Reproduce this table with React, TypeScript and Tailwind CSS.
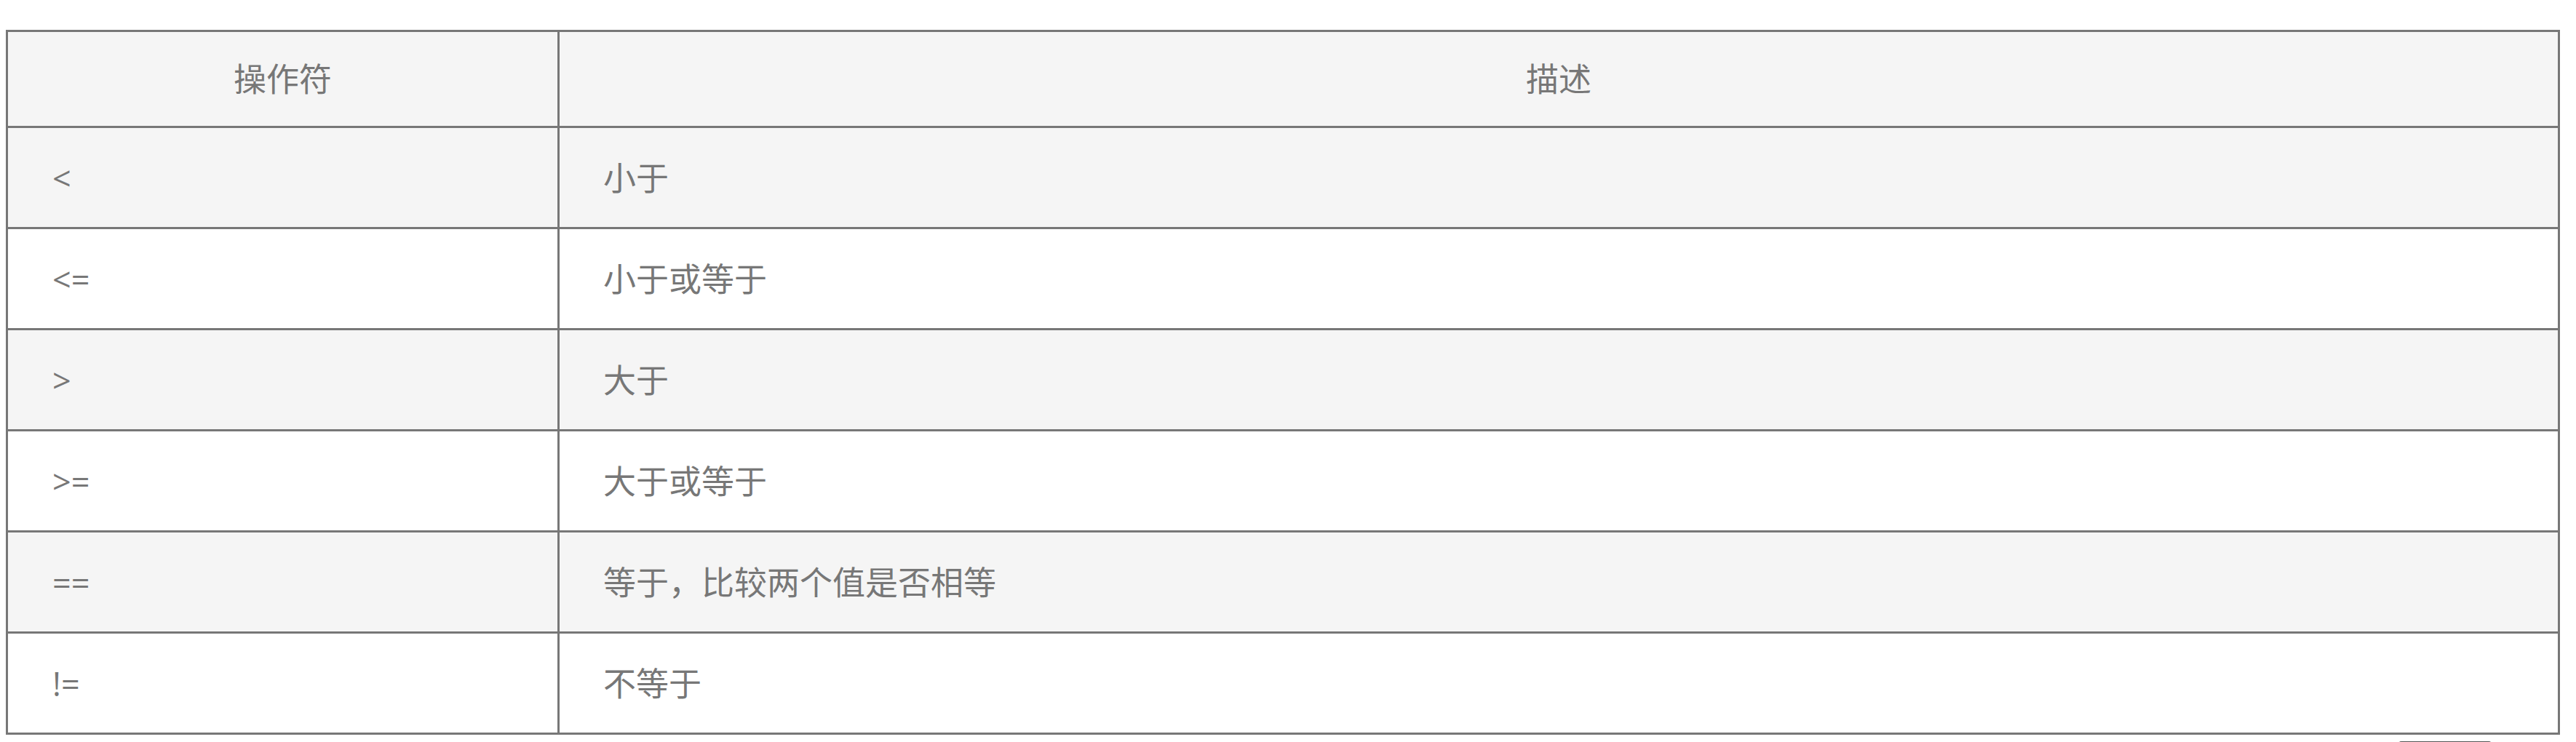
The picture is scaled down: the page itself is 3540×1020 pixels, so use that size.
import React from "react";

const rows: { op: string; desc: string; shade: boolean }[] = [
  { op: "<", desc: "小于", shade: true },
  { op: "<=", desc: "小于或等于", shade: false },
  { op: ">", desc: "大于", shade: true },
  { op: ">=", desc: "大于或等于", shade: false },
  { op: "==", desc: "等于，比较两个值是否相等", shade: true },
  { op: "!=", desc: "不等于", shade: false },
];

export default function App() {
  return (
    <div
      className="min-h-screen bg-white pl-[8px] pr-[22px] pt-[41px] text-[#777777] text-[45px] leading-none"
      style={{ fontFamily: '"Open Sans", "Noto Sans CJK SC", sans-serif' }}
    >
      <div className="border-[3px] border-[#777777]">
        <div className="flex h-[132px] border-b-[3px] border-[#777777] bg-[#f5f5f5]">
          <div className="flex w-[758px] shrink-0 items-center justify-center border-r-[3px] border-[#777777]">
            操作符
          </div>
          <div className="flex flex-1 items-center justify-center">描述</div>
        </div>
        {rows.map((r, i) => (
          <div
            key={i}
            className={
              (r.shade ? "bg-[#f5f5f5] " : "bg-white ") +
              (i < rows.length - 1
                ? "flex h-[139px] border-b-[3px] border-[#777777]"
                : "flex h-[136px]")
            }
          >
            <div className="flex w-[758px] shrink-0 items-center border-r-[3px] border-[#777777] pl-[61px]">
              {r.op}
            </div>
            <div className="flex flex-1 items-center pl-[60px]">{r.desc}</div>
          </div>
        ))}
      </div>
      <div className="flex justify-end pr-[93px] pt-[9px]">
        <div className="h-[30px] w-[130px] rounded-t-[5px] border-t border-[#555555]" />
      </div>
    </div>
  );
}
